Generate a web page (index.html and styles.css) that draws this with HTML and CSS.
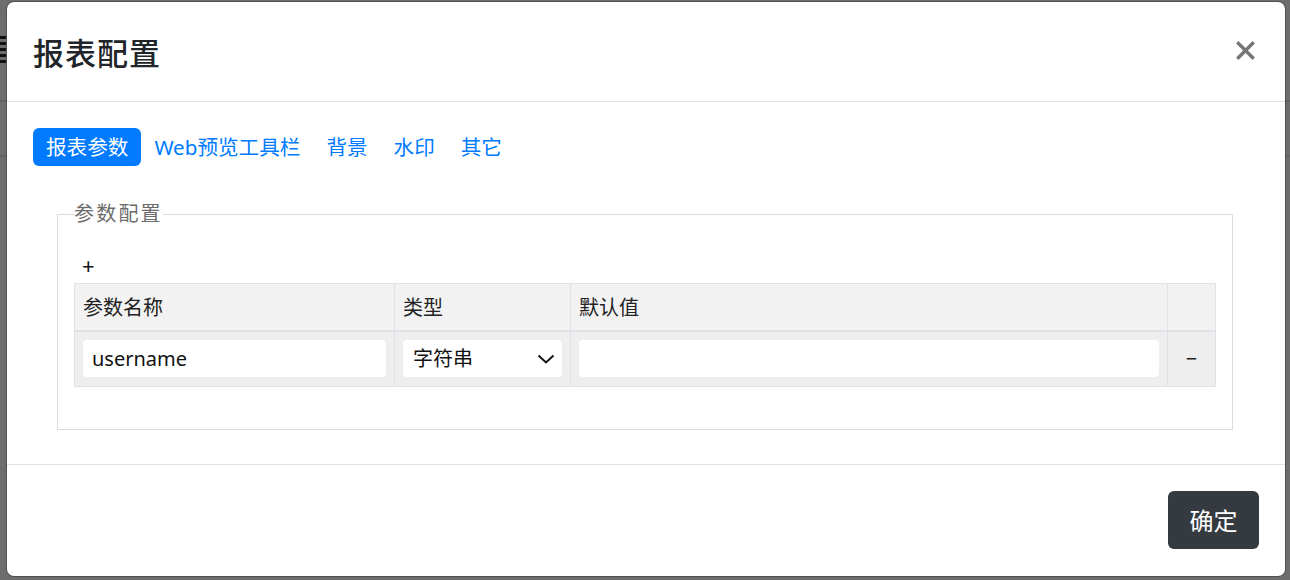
FILE: index.html
```html
<!DOCTYPE html>
<html lang="zh-CN">
<head>
  <meta charset="UTF-8" />
  <title>报表配置</title>
  <link rel="stylesheet" href="styles.css">
</head>
<body>
  <div class="backdrop">
    <div class="under-icon"></div>
    <div class="under-line line-a"></div>
    <div class="under-line line-b"></div>
  </div>

  <div class="modal">
    <div class="modal-header">
      <h4 class="modal-title">报表配置</h4>
      <button class="close" type="button" aria-label="Close">
        <svg width="19" height="19" viewBox="0 0 19 19">
          <path d="M2.5 2.5L16.5 16.5M16.5 2.5L2.5 16.5" stroke="#767676" stroke-width="3.4" stroke-linecap="square" fill="none"/>
        </svg>
      </button>
    </div>

    <div class="modal-body">
      <ul class="nav-pills">
        <li><a class="active">报表参数</a></li>
        <li><a>Web预览工具栏</a></li>
        <li><a>背景</a></li>
        <li><a>水印</a></li>
        <li><a>其它</a></li>
      </ul>

      <fieldset class="param-box">
        <legend>参数配置</legend>
        <div class="add">+</div>
        <table class="param-table">
          <thead>
            <tr>
              <th class="col-name">参数名称</th>
              <th class="col-type">类型</th>
              <th class="col-default">默认值</th>
              <th class="col-op"></th>
            </tr>
          </thead>
          <tbody>
            <tr>
              <td><div class="field">username</div></td>
              <td>
                <div class="field select">
                  <span>字符串</span>
                  <svg width="18" height="10" viewBox="0 0 18 10">
                    <path d="M1.5 1.5L9 8.5L16.5 1.5" stroke="#111" stroke-width="2" fill="none"/>
                  </svg>
                </div>
              </td>
              <td><div class="field"></div></td>
              <td class="op">−</td>
            </tr>
          </tbody>
        </table>
      </fieldset>
    </div>

    <div class="modal-footer">
      <button class="btn-dark" type="button">确定</button>
    </div>
  </div>
</body>
</html>
```

FILE: styles.css
```css
html, body {
  margin: 0;
  padding: 0;
  height: 100%;
  overflow: hidden;
  background-color: #6d6d6d;
  font-family: "Noto Sans", "Noto Sans CJK SC", sans-serif;
}

/* page behind the backdrop, only a strip shows */
.backdrop {
  position: absolute;
  inset: 0;
}

.under-icon {
  position: absolute;
  left: 0;
  top: 36px;
  width: 6px;
  height: 30px;
  background: repeating-linear-gradient(#111 0 3px, #6d6d6d 3px 6px);
}

.under-line {
  position: absolute;
  left: 0;
  right: 0;
  height: 2px;
  background-color: #626262;
}

.line-a { top: 100px; }
.line-b { top: 155px; }

.modal {
  position: relative;
  margin: 2px 0 0 7px;
  width: 1278px;
  height: 574px;
  background-color: #fff;
  border-radius: 7px;
  box-shadow: 0 0 0 1px rgba(0, 0, 0, 0.25);
  display: flex;
  flex-direction: column;
}

.modal-header {
  height: 99px;
  display: flex;
  align-items: center;
  justify-content: space-between;
  padding: 0 30px 0 26px;
  border-bottom: 1px solid #dee2e6;
}

.modal-title {
  margin: 0;
  font-size: 31px;
  font-weight: 500;
  color: #212529;
  letter-spacing: 1px;
}

.close {
  border: 0;
  background: none;
  padding: 0;
  width: 19px;
  height: 19px;
  margin-top: -2px;
  display: flex;
}

.modal-body {
  flex: 1;
  padding: 26px 26px 0 26px;
}

.nav-pills {
  list-style: none;
  margin: 0;
  padding: 0;
  display: flex;
}

.nav-pills a {
  display: block;
  height: 38px;
  line-height: 39px;
  padding: 0 13px;
  font-size: 20.6px;
  color: #007bff;
  border-radius: 6px;
}

.nav-pills a.active {
  background-color: #007bff;
  color: #fff;
}

.param-box {
  margin: 36px 26px 0 24px;
  padding: 0 16px 42px 16px;
  border: 1px solid #dcdcdc;
  min-width: 0;
}

.param-box legend {
  padding: 0;
  font-size: 20px;
  color: #6c6c6c;
  letter-spacing: 2.2px;
  line-height: 24px;
}

.add {
  margin-top: 24px;
  font-size: 22px;
  line-height: 30px;
  height: 30px;
  color: #111;
  padding-left: 8px;
}

.param-table {
  margin-top: 3px;
  width: 100%;
  border-collapse: collapse;
  table-layout: fixed;
  font-size: 20px;
  color: #222;
}

.param-table th,
.param-table td {
  box-sizing: border-box;
  border: 1px solid #dee2e6;
  padding: 0 8px;
  text-align: left;
}

.param-table th {
  height: 47px;
  font-weight: normal;
  background-color: #f2f2f2;
  border-bottom: 2px solid #dee2e6;
}

.param-table td {
  height: 56px;
  background-color: #eeeeee;
}

.col-name { width: 320px; }
.col-type { width: 176px; }
.col-op { width: 48px; }

.field {
  height: 37px;
  line-height: 37px;
  background-color: #fff;
  border-radius: 4px;
  padding: 0 9px;
  font-size: 20px;
  color: #111;
}

.select {
  display: flex;
  align-items: center;
  justify-content: space-between;
  padding: 0 7px 0 10px;
}

.op {
  text-align: center !important;
  font-size: 20px;
  color: #222;
  padding: 0 !important;
}

.modal-footer {
  height: 111px;
  border-top: 1px solid #dee2e6;
  display: flex;
  align-items: center;
  justify-content: flex-end;
  padding: 0 26px;
}

.btn-dark {
  width: 91px;
  height: 58px;
  margin-top: -2px;
  border: 0;
  border-radius: 6px;
  background-color: #343a40;
  color: #fff;
  font-family: "Noto Sans", "Noto Sans CJK SC", sans-serif;
  font-size: 24px;
}
```
